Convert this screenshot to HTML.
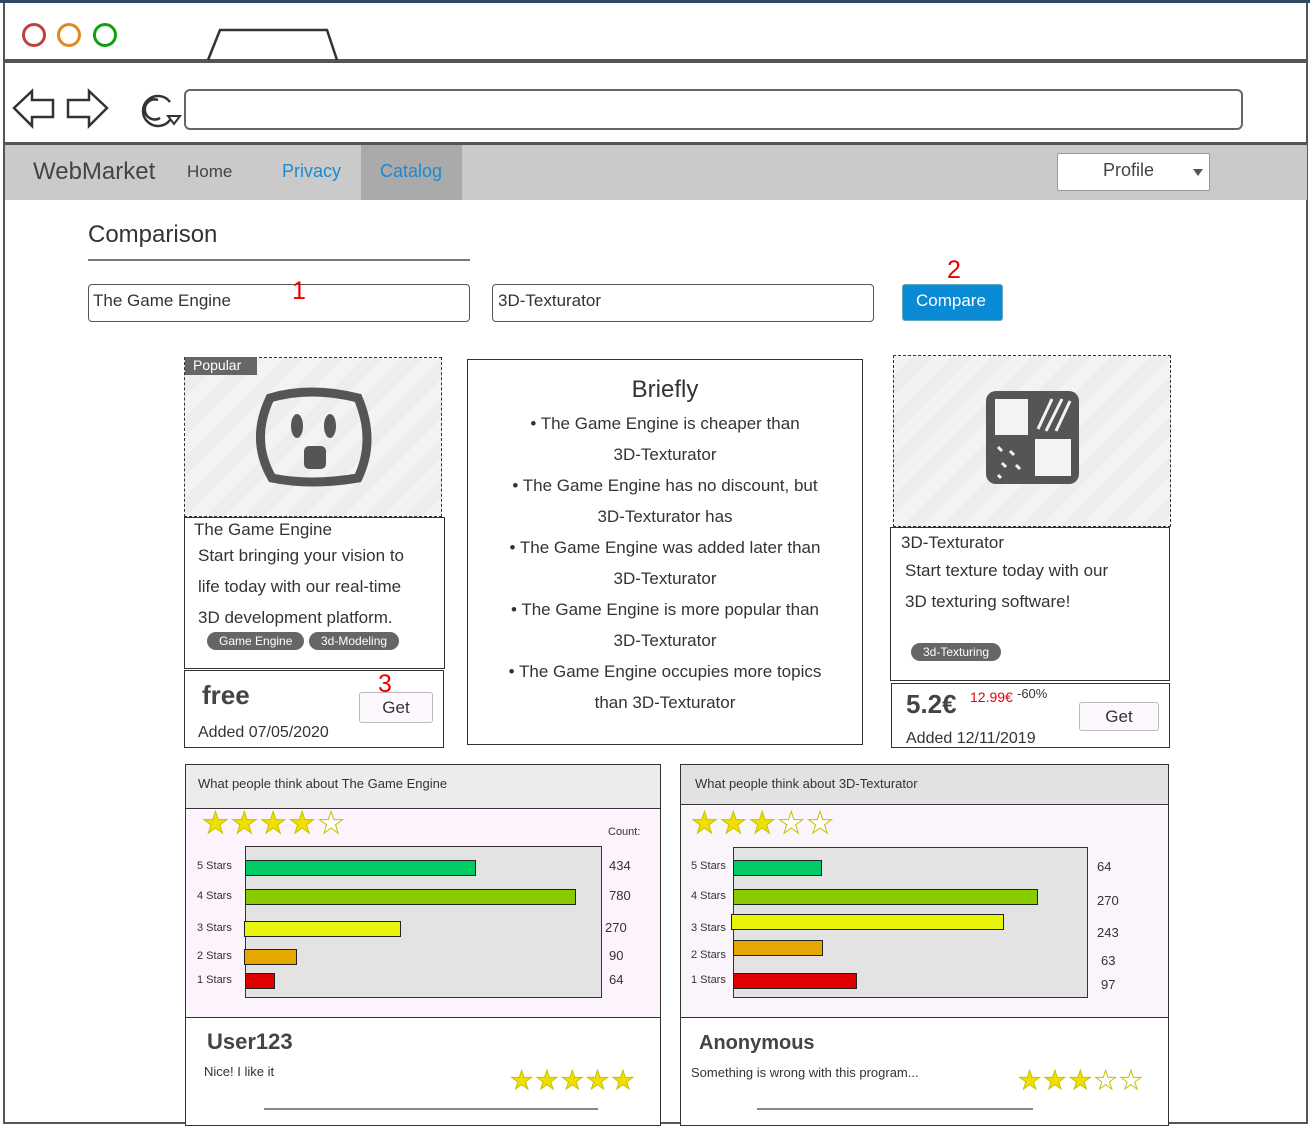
<!DOCTYPE html>
<html><head><meta charset="utf-8">
<style>
*{box-sizing:border-box;margin:0;padding:0}
body{width:1310px;height:1125px;background:#fff;position:relative;overflow:hidden;font-family:"Liberation Sans",sans-serif;color:#333}
.a{position:absolute}
.box{position:absolute;border:1.5px solid #333;background:#fff}
.t{position:absolute;white-space:nowrap}
.bar{position:absolute;border:1.5px solid #222;height:16px}
.tag{position:absolute;background:#666;color:#fff;border-radius:9px;font-size:12px;height:18px;line-height:18px;padding:0 12px}
.stars{position:absolute;color:#f0e000;font-size:30px;letter-spacing:2px;-webkit-text-stroke:1px #c8c000;white-space:nowrap}
.stripe{background:repeating-linear-gradient(135deg,#f3f3f3 0 14px,#ededed 14px 28px)}
</style></head><body>
<!-- window frame -->
<div class="a" style="left:0;top:0;width:1310px;height:3px;background:#2c4a66"></div>
<div class="a" style="left:3px;top:3px;width:1305px;height:1121px;border:2px solid #555;border-top:none"></div>
<div class="a" style="left:5px;top:59px;width:1303px;height:4px;background:#555"></div>
<div class="a" style="left:5px;top:142px;width:1303px;height:3px;background:#555"></div>
<div class="a" style="left:22px;top:23px;width:24px;height:24px;border:3px solid #c04040;border-radius:50%"></div>
<div class="a" style="left:57px;top:23px;width:24px;height:24px;border:3px solid #e08820;border-radius:50%"></div>
<div class="a" style="left:93px;top:23px;width:24px;height:24px;border:3px solid #10a010;border-radius:50%"></div>
<svg class="a" style="left:205px;top:27px" width="135" height="34"><path d="M3 33 L15 3 L122 3 L132 33" fill="none" stroke="#333" stroke-width="2.5"/></svg>
<svg class="a" style="left:10px;top:88px" width="175" height="42">
<path d="M4 20 L22 3 L22 12 L43 12 L43 29 L22 29 L22 38 Z" fill="none" stroke="#333" stroke-width="2.5"/>
<path d="M97 20 L79 3 L79 12 L58 12 L58 29 L79 29 L79 38 Z" fill="none" stroke="#333" stroke-width="2.5"/>
<path d="M160 14 A15 15 0 1 0 160 32 M148 12 A10 10 0 1 0 150 30" fill="none" stroke="#333" stroke-width="2.5"/>
<path d="M158 28 L170 28 L164 36 Z" fill="none" stroke="#333" stroke-width="2"/></svg>
<div class="a" style="left:184px;top:89px;width:1059px;height:41px;border:2.5px solid #666;border-radius:6px"></div>
<!-- nav -->
<div class="a" style="left:5px;top:145px;width:1302px;height:55px;background:#cacaca"></div>
<div class="a" style="left:361px;top:145px;width:101px;height:55px;background:#aaa"></div>
<div class="t" style="left:33px;top:158px;font-size:24px;color:#444">WebMarket</div>
<div class="t" style="left:187px;top:162px;font-size:17px;color:#444">Home</div>
<div class="t" style="left:282px;top:161px;font-size:18px;color:#1a8ad4">Privacy</div>
<div class="t" style="left:380px;top:161px;font-size:18px;color:#1a8ad4">Catalog</div>
<div class="a" style="left:1057px;top:153px;width:153px;height:38px;background:#fff;border:1px solid #999;border-radius:2px"></div>
<div class="t" style="left:1103px;top:160px;font-size:18px;color:#444">Profile</div>
<div class="a" style="left:1193px;top:169px;border-left:5px solid transparent;border-right:5px solid transparent;border-top:7px solid #555"></div>
<!-- comparison -->
<div class="t" style="left:88px;top:221px;font-size:24px;color:#333">Comparison</div>
<div class="a" style="left:88px;top:259px;width:382px;height:2px;background:#777"></div>
<div class="a" style="left:88px;top:284px;width:382px;height:38px;border:1.5px solid #555;border-radius:4px"></div>
<div class="t" style="left:93px;top:291px;font-size:17px">The Game Engine</div>
<div class="t" style="left:292px;top:277px;font-size:25px;color:#e00">1</div>
<div class="a" style="left:492px;top:284px;width:382px;height:38px;border:1.5px solid #555;border-radius:4px"></div>
<div class="t" style="left:498px;top:291px;font-size:17px">3D-Texturator</div>
<div class="a" style="left:902px;top:284px;width:101px;height:37px;background:#0a8ad4;border:1px solid #6ab;border-radius:3px"></div>
<div class="t" style="left:916px;top:291px;font-size:17px;color:#fff">Compare</div>
<div class="t" style="left:947px;top:256px;font-size:25px;color:#e00">2</div>
<!-- left card -->
<div class="a stripe" style="left:184px;top:357px;width:258px;height:160px;border:1.5px dashed #333"></div>
<div class="a" style="left:185px;top:357px;width:72px;height:18px;background:#666;color:#fff;font-size:14px;padding-left:8px">Popular</div>
<svg class="a" style="left:250px;top:380px" width="125" height="110"><path d="M20 18 Q60 6 108 18 Q126 60 108 98 Q60 106 22 98 Q0 60 20 18 Z" fill="none" stroke="#555" stroke-width="9"/><ellipse cx="47" cy="46" rx="6" ry="12" fill="#555"/><ellipse cx="80" cy="46" rx="6" ry="12" fill="#555"/><rect x="54" y="66" width="22" height="23" rx="5" fill="#555"/></svg>
<div class="box" style="left:184px;top:517px;width:261px;height:152px"></div>
<div class="t" style="left:194px;top:520px;font-size:17px">The Game Engine</div>
<div class="a" style="left:198px;top:540px;font-size:17px;line-height:31px;width:240px">Start bringing your vision to<br>life today with our real-time<br>3D development platform.</div>
<div class="tag" style="left:207px;top:632px">Game Engine</div>
<div class="tag" style="left:309px;top:632px">3d-Modeling</div>
<div class="box" style="left:184px;top:670px;width:260px;height:78px"></div>
<div class="t" style="left:202px;top:680px;font-size:26px;font-weight:bold;color:#444">free</div>
<div class="t" style="left:198px;top:724px;font-size:16px">Added 07/05/2020</div>
<div class="a" style="left:359px;top:692px;width:74px;height:31px;background:#fdf8fd;border:1px solid #bbb;border-radius:3px;text-align:center;font-size:17px;line-height:29px">Get</div>
<div class="t" style="left:378px;top:670px;font-size:25px;color:#e00">3</div>
<!-- middle -->
<div class="box" style="left:467px;top:359px;width:396px;height:386px"></div>
<div class="a" style="left:467px;top:372px;width:396px;text-align:center;font-size:17px;line-height:31px"><div style="font-size:24px;line-height:36px">Briefly</div>• The Game Engine is cheaper than<br>3D-Texturator<br>• The Game Engine has no discount, but<br>3D-Texturator has<br>• The Game Engine was added later than<br>3D-Texturator<br>• The Game Engine is more popular than<br>3D-Texturator<br>• The Game Engine occupies more topics<br>than 3D-Texturator</div>
<!-- right card -->
<div class="a stripe" style="left:893px;top:355px;width:278px;height:172px;border:1.5px dashed #333"></div>
<svg class="a" style="left:980px;top:385px" width="105" height="105"><rect x="6" y="6" width="93" height="93" rx="10" fill="#555"/><rect x="15" y="14" width="33" height="36" fill="#f3f3f3"/><rect x="55" y="54" width="36" height="37" fill="#f3f3f3"/><path d="M58 44 L72 14 M66 46 L82 14 M76 46 L90 16" stroke="#f3f3f3" stroke-width="3"/><path d="M18 62 l4 4 M30 66 l4 4 M22 78 l4 4 M36 80 l4 4 M18 90 l3 3" stroke="#f3f3f3" stroke-width="3"/></svg>
<div class="box" style="left:890px;top:527px;width:280px;height:154px"></div>
<div class="t" style="left:901px;top:533px;font-size:17px">3D-Texturator</div>
<div class="a" style="left:905px;top:555px;font-size:17px;line-height:31px">Start texture today with our<br>3D texturing software!</div>
<div class="tag" style="left:911px;top:643px">3d-Texturing</div>
<div class="box" style="left:891px;top:683px;width:279px;height:65px"></div>
<div class="t" style="left:906px;top:689px;font-size:26px;font-weight:bold;color:#444">5.2€</div>
<div class="t" style="left:970px;top:689px;font-size:14px;color:#e00">12.99€</div>
<div class="t" style="left:1017px;top:686px;font-size:13px;color:#333">-60%</div>
<div class="t" style="left:906px;top:730px;font-size:16px">Added 12/11/2019</div>
<div class="a" style="left:1079px;top:702px;width:80px;height:29px;background:#fdf8fd;border:1px solid #bbb;border-radius:3px;text-align:center;font-size:17px;line-height:27px">Get</div>
<!-- reviews left -->
<div class="box" style="left:185px;top:764px;width:476px;height:362px"></div>
<div class="a" style="left:186px;top:765px;width:474px;height:44px;background:#ececec;border-bottom:1.5px solid #333"></div>
<div class="t" style="left:198px;top:776px;font-size:13px">What people think about The Game Engine</div>
<div class="a" style="left:186px;top:810px;width:474px;height:208px;background:#fdf3fd;border-bottom:1.5px solid #333"></div>
<div class="stars" style="left:202px;top:806px">★★★★<span style="color:#fff">★</span></div>
<div class="t" style="left:608px;top:826px;font-size:11px">Count:</div>
<div class="a" style="left:245px;top:846px;width:357px;height:152px;background:#e3e3e3;border:1.5px solid #333"></div>
<div class="bar" style="left:245px;top:860px;width:231px;background:#00cc66"></div>
<div class="bar" style="left:245px;top:889px;width:331px;background:#88cc00"></div>
<div class="bar" style="left:244px;top:921px;width:157px;background:#e8f50a"></div>
<div class="bar" style="left:244px;top:949px;width:53px;background:#e6a800"></div>
<div class="bar" style="left:245px;top:973px;width:30px;background:#e00000"></div>
<div class="a" style="left:197px;top:861px;font-size:11px;line-height:1">5 Stars</div>
<div class="a" style="left:197px;top:891px;font-size:11px;line-height:1">4 Stars</div>
<div class="a" style="left:197px;top:923px;font-size:11px;line-height:1">3 Stars</div>
<div class="a" style="left:197px;top:951px;font-size:11px;line-height:1">2 Stars</div>
<div class="a" style="left:197px;top:975px;font-size:11px;line-height:1">1 Stars</div>
<div class="a" style="left:609px;top:859px;font-size:13px;line-height:1">434</div>
<div class="a" style="left:609px;top:889px;font-size:13px;line-height:1">780</div>
<div class="a" style="left:605px;top:921px;font-size:13px;line-height:1">270</div>
<div class="a" style="left:609px;top:949px;font-size:13px;line-height:1">90</div>
<div class="a" style="left:609px;top:973px;font-size:13px;line-height:1">64</div>
<div class="t" style="left:207px;top:1029px;font-size:22px;font-weight:bold;color:#444">User123</div>
<div class="t" style="left:204px;top:1064px;font-size:13px">Nice! I like it</div>
<div class="stars" style="left:510px;top:1065px;font-size:26px">★★★★★</div>
<div class="a" style="left:264px;top:1108px;width:334px;height:2px;background:#888"></div>
<!-- reviews right -->
<div class="box" style="left:680px;top:764px;width:489px;height:362px"></div>
<div class="a" style="left:681px;top:765px;width:487px;height:40px;background:#e2e2e2;border-bottom:1.5px solid #333"></div>
<div class="t" style="left:695px;top:776px;font-size:13px">What people think about 3D-Texturator</div>
<div class="a" style="left:681px;top:806px;width:487px;height:212px;background:#f9f5fa;border-bottom:1.5px solid #333"></div>
<div class="stars" style="left:691px;top:806px">★★★<span style="color:#fff">★★</span></div>
<div class="a" style="left:733px;top:847px;width:355px;height:151px;background:#e3e3e3;border:1.5px solid #333"></div>
<div class="bar" style="left:733px;top:860px;width:89px;background:#00cc66"></div>
<div class="bar" style="left:733px;top:889px;width:305px;background:#88cc00"></div>
<div class="bar" style="left:731px;top:914px;width:273px;background:#e8f50a"></div>
<div class="bar" style="left:733px;top:940px;width:90px;background:#e6a800"></div>
<div class="bar" style="left:733px;top:973px;width:124px;background:#e00000"></div>
<div class="a" style="left:691px;top:861px;font-size:11px;line-height:1">5 Stars</div>
<div class="a" style="left:691px;top:891px;font-size:11px;line-height:1">4 Stars</div>
<div class="a" style="left:691px;top:923px;font-size:11px;line-height:1">3 Stars</div>
<div class="a" style="left:691px;top:950px;font-size:11px;line-height:1">2 Stars</div>
<div class="a" style="left:691px;top:975px;font-size:11px;line-height:1">1 Stars</div>
<div class="a" style="left:1097px;top:860px;font-size:13px;line-height:1">64</div>
<div class="a" style="left:1097px;top:894px;font-size:13px;line-height:1">270</div>
<div class="a" style="left:1097px;top:926px;font-size:13px;line-height:1">243</div>
<div class="a" style="left:1101px;top:954px;font-size:13px;line-height:1">63</div>
<div class="a" style="left:1101px;top:978px;font-size:13px;line-height:1">97</div>
<div class="t" style="left:699px;top:1032px;font-size:20px;font-weight:bold;color:#444">Anonymous</div>
<div class="t" style="left:691px;top:1065px;font-size:13px">Something is wrong with this program...</div>
<div class="stars" style="left:1018px;top:1065px;font-size:26px">★★★<span style="color:#fff">★★</span></div>
<div class="a" style="left:757px;top:1108px;width:276px;height:2px;background:#888"></div>
</body></html>
